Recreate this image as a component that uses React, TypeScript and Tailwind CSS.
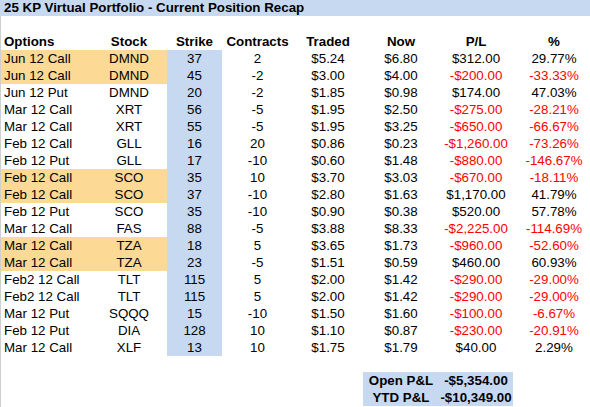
import React from 'react';

type Row = {
  option: string;
  stock: string;
  strike: number;
  contracts: number;
  traded: string;
  now: string;
  pl: string;
  pct: string;
  hl?: boolean;
};

const ROWS: Row[] = [
  { option: 'Jun 12 Call', stock: 'DMND', strike: 37, contracts: 2, traded: '$5.24', now: '$6.80', pl: '$312.00', pct: '29.77%', hl: true },
  { option: 'Jun 12 Call', stock: 'DMND', strike: 45, contracts: -2, traded: '$3.00', now: '$4.00', pl: '-$200.00', pct: '-33.33%', hl: true },
  { option: 'Jun 12 Put', stock: 'DMND', strike: 20, contracts: -2, traded: '$1.85', now: '$0.98', pl: '$174.00', pct: '47.03%' },
  { option: 'Mar 12 Call', stock: 'XRT', strike: 56, contracts: -5, traded: '$1.95', now: '$2.50', pl: '-$275.00', pct: '-28.21%' },
  { option: 'Mar 12 Call', stock: 'XRT', strike: 55, contracts: -5, traded: '$1.95', now: '$3.25', pl: '-$650.00', pct: '-66.67%' },
  { option: 'Feb 12 Call', stock: 'GLL', strike: 16, contracts: 20, traded: '$0.86', now: '$0.23', pl: '-$1,260.00', pct: '-73.26%' },
  { option: 'Feb 12 Put', stock: 'GLL', strike: 17, contracts: -10, traded: '$0.60', now: '$1.48', pl: '-$880.00', pct: '-146.67%' },
  { option: 'Feb 12 Call', stock: 'SCO', strike: 35, contracts: 10, traded: '$3.70', now: '$3.03', pl: '-$670.00', pct: '-18.11%', hl: true },
  { option: 'Feb 12 Call', stock: 'SCO', strike: 37, contracts: -10, traded: '$2.80', now: '$1.63', pl: '$1,170.00', pct: '41.79%', hl: true },
  { option: 'Feb 12 Put', stock: 'SCO', strike: 35, contracts: -10, traded: '$0.90', now: '$0.38', pl: '$520.00', pct: '57.78%' },
  { option: 'Mar 12 Call', stock: 'FAS', strike: 88, contracts: -5, traded: '$3.88', now: '$8.33', pl: '-$2,225.00', pct: '-114.69%' },
  { option: 'Mar 12 Call', stock: 'TZA', strike: 18, contracts: 5, traded: '$3.65', now: '$1.73', pl: '-$960.00', pct: '-52.60%', hl: true },
  { option: 'Mar 12 Call', stock: 'TZA', strike: 23, contracts: -5, traded: '$1.51', now: '$0.59', pl: '$460.00', pct: '60.93%', hl: true },
  { option: 'Feb2 12 Call', stock: 'TLT', strike: 115, contracts: 5, traded: '$2.00', now: '$1.42', pl: '-$290.00', pct: '-29.00%' },
  { option: 'Feb2 12 Call', stock: 'TLT', strike: 115, contracts: 5, traded: '$2.00', now: '$1.42', pl: '-$290.00', pct: '-29.00%' },
  { option: 'Mar 12 Put', stock: 'SQQQ', strike: 15, contracts: -10, traded: '$1.50', now: '$1.60', pl: '-$100.00', pct: '-6.67%' },
  { option: 'Feb 12 Put', stock: 'DIA', strike: 128, contracts: 10, traded: '$1.10', now: '$0.87', pl: '-$230.00', pct: '-20.91%' },
  { option: 'Mar 12 Call', stock: 'XLF', strike: 13, contracts: 10, traded: '$1.75', now: '$1.79', pl: '$40.00', pct: '2.29%' },
];

// column widths copied off the sheet
const cols = 'grid grid-cols-[90px_76px_55px_71px_70px_76px_74px_82px]';

export default function App() {
  return (
    <div className="w-[590px] h-[407px] overflow-hidden bg-white text-black text-[13.33px] leading-none font-['Liberation_Sans',Arial,sans-serif]">
      {/* Title */}
      <div className="h-[16px] bg-[#c6d9f1] flex items-center pl-[4px] font-bold whitespace-nowrap">
        25 KP Virtual Portfolio - Current Position Recap
      </div>

      <div className="border-l border-[#cfcfcf] h-[391px]">
        <div className="h-[17px]" />

        {/* Header */}
        <div className={`${cols} h-[17px] items-center font-bold`}>
          <div className="pl-[3px]">Options</div>
          <div className="text-center">Stock</div>
          <div className="text-center">Strike</div>
          <div className="text-center">Contracts</div>
          <div className="text-center">Traded</div>
          <div className="text-center">Now</div>
          <div className="text-center">P/L</div>
          <div className="text-center">%</div>
        </div>

        {/* Positions */}
        {ROWS.map((r, i) => {
          const neg = r.pl.startsWith('-');
          return (
            <div key={i} className={`${cols} h-[17px] items-stretch`}>
              <div className={`pl-[3px] flex items-center whitespace-nowrap ${r.hl ? 'bg-[#fcd995]' : ''}`}>{r.option}</div>
              <div className={`flex items-center justify-center ${r.hl ? 'bg-[#fcd995]' : ''}`}>{r.stock}</div>
              <div className="flex items-center justify-center bg-[#c6d9f1]">{r.strike}</div>
              <div className="flex items-center justify-center">{r.contracts}</div>
              <div className="flex items-center justify-center">{r.traded}</div>
              <div className="flex items-center justify-center">{r.now}</div>
              <div className={`flex items-center justify-center whitespace-nowrap ${neg ? 'text-[#ff0000]' : ''}`}>{r.pl}</div>
              <div className={`flex items-center justify-center whitespace-nowrap ${neg ? 'text-[#ff0000]' : ''}`}>{r.pct}</div>
            </div>
          );
        })}

        <div className="h-[16px]" />

        {/* Totals */}
        <div className={`${cols} h-[17px] items-stretch`}>
          <div className="col-start-6 bg-[#c6d9f1] flex items-center justify-center font-bold whitespace-nowrap">Open P&amp;L</div>
          <div className="bg-[#c6d9f1] flex items-center justify-center font-bold whitespace-nowrap">-$5,354.00</div>
        </div>
        <div className={`${cols} h-[17px] items-stretch`}>
          <div className="col-start-6 bg-[#c6d9f1] flex items-center justify-center font-bold whitespace-nowrap">YTD P&amp;L</div>
          <div className="bg-[#c6d9f1] flex items-center justify-center font-bold whitespace-nowrap">-$10,349.00</div>
        </div>
      </div>
    </div>
  );
}
